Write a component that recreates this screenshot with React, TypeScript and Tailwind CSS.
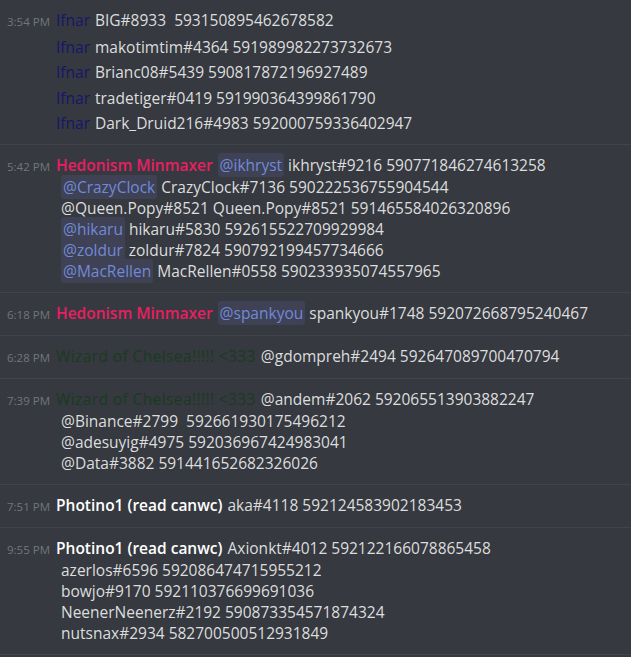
import React from 'react';

type Part = string | { mention: string };

type Line = Part[];

type Msg = {
  time?: string;
  name?: string;
  nameClass?: string;
  lines: Line[];
};

const IFNAR = 'text-[#16166b]';
const HEDONISM = 'text-[#e91e63] font-semibold';
const WIZARD = 'text-[#1a3b21] tracking-[0.4px]';
const PHOTINO = 'text-white font-semibold';

function Mention({ name }: { name: string }) {
  return (
    <span className="rounded-[3px] bg-[#3e4254] px-[2px] py-[1px] text-[#7289da]">
      {name}
    </span>
  );
}

function Timestamp({ time }: { time?: string }) {
  return (
    <span className="inline-block w-[50px] shrink-0 text-right text-[11.5px] text-[#72767d]">
      {time}
    </span>
  );
}

function renderLine(line: Line) {
  return line.map((part, i) =>
    typeof part === 'string' ? (
      <span key={i}>{part}</span>
    ) : (
      <Mention key={i} name={part.mention} />
    )
  );
}

function Group({ msgs, first }: { msgs: Msg[]; first?: boolean }) {
  return (
    <div
      className={
        first
          ? 'border-b border-[#414449] pt-[8px] pb-[7px]'
          : 'border-b border-[#414449] py-[10px]'
      }
    >
      {msgs.map((msg, i) => (
        <div key={i} className={first ? 'py-[2.25px]' : ''}>
          <div className="flex items-baseline whitespace-pre">
            <Timestamp time={msg.time} />
            <span className={'ml-[6px] mr-[5px] ' + msg.nameClass}>{msg.name}</span>
            <span>{renderLine(msg.lines[0])}</span>
          </div>
          {msg.lines.slice(1).map((line, j) => (
            <div key={j} className="whitespace-pre pl-[61px]">
              {renderLine(line)}
            </div>
          ))}
        </div>
      ))}
    </div>
  );
}

const groups: { msgs: Msg[]; first?: boolean }[] = [
  {
    first: true,
    msgs: [
      { time: '3:54 PM', name: 'Ifnar', nameClass: IFNAR, lines: [['BIG#8933  593150895462678582']] },
      { name: 'Ifnar', nameClass: IFNAR, lines: [['makotimtim#4364 591989982273732673']] },
      { name: 'Ifnar', nameClass: IFNAR, lines: [['Brianc08#5439 590817872196927489']] },
      { name: 'Ifnar', nameClass: IFNAR, lines: [['tradetiger#0419 591990364399861790']] },
      { name: 'Ifnar', nameClass: IFNAR, lines: [['Dark_Druid216#4983 592000759336402947']] },
    ],
  },
  {
    msgs: [
      {
        time: '5:42 PM',
        name: 'Hedonism Minmaxer',
        nameClass: HEDONISM,
        lines: [
          [{ mention: '@ikhryst' }, ' ikhryst#9216 590771846274613258'],
          [{ mention: '@CrazyClock' }, ' CrazyClock#7136 590222536755904544'],
          ['@Queen.Popy#8521 Queen.Popy#8521 591465584026320896'],
          [{ mention: '@hikaru' }, ' hikaru#5830 592615522709929984'],
          [{ mention: '@zoldur' }, ' zoldur#7824 590792199457734666'],
          [{ mention: '@MacRellen' }, ' MacRellen#0558 590233935074557965'],
        ],
      },
    ],
  },
  {
    msgs: [
      {
        time: '6:18 PM',
        name: 'Hedonism Minmaxer',
        nameClass: HEDONISM,
        lines: [[{ mention: '@spankyou' }, ' spankyou#1748 592072668795240467']],
      },
    ],
  },
  {
    msgs: [
      {
        time: '6:28 PM',
        name: 'Wizard of Chelsea!!!!! <333',
        nameClass: WIZARD,
        lines: [['@gdompreh#2494 592647089700470794']],
      },
    ],
  },
  {
    msgs: [
      {
        time: '7:39 PM',
        name: 'Wizard of Chelsea!!!!! <333',
        nameClass: WIZARD,
        lines: [
          ['@andem#2062 592065513903882247'],
          ['@Binance#2799  592661930175496212'],
          ['@adesuyig#4975 592036967424983041'],
          ['@Data#3882 591441652682326026'],
        ],
      },
    ],
  },
  {
    msgs: [
      {
        time: '7:51 PM',
        name: 'Photino1 (read canwc)',
        nameClass: PHOTINO,
        lines: [['aka#4118 592124583902183453']],
      },
    ],
  },
  {
    msgs: [
      {
        time: '9:55 PM',
        name: 'Photino1 (read canwc)',
        nameClass: PHOTINO,
        lines: [
          ['Axionkt#4012 592122166078865458'],
          ['azerlos#6596 592086474715955212'],
          ['bowjo#9170 592110376699691036'],
          ['NeenerNeenerz#2192 590873354571874324'],
          ['nutsnax#2934 582700500512931849'],
        ],
      },
    ],
  },
];

export default function App() {
  return (
    <div className="h-[657px] w-[631px] overflow-hidden bg-[#36393f] font-['Open_Sans',sans-serif] text-[15.5px] leading-[21px] text-[#dcddde]">
      {groups.map((g, i) => (
        <Group key={i} msgs={g.msgs} first={g.first} />
      ))}
    </div>
  );
}
